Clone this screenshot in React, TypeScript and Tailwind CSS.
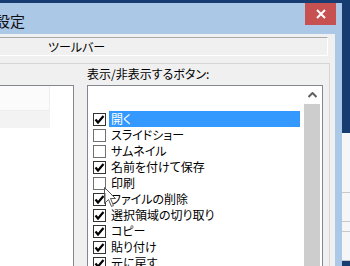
import React from "react";

const items: { label: string; checked: boolean; selected?: boolean }[] = [
  { label: "開く", checked: true, selected: true },
  { label: "スライドショー", checked: false },
  { label: "サムネイル", checked: false },
  { label: "名前を付けて保存", checked: true },
  { label: "印刷", checked: false },
  { label: "ファイルの削除", checked: true },
  { label: "選択領域の切り取り", checked: true },
  { label: "コピー", checked: true },
  { label: "貼り付け", checked: true },
  { label: "元に戻す", checked: true },
];

function Check({ checked }: { checked: boolean }) {
  return (
    <div
      className={`w-[13px] h-[13px] shrink-0 bg-white border ${
        checked ? "border-[#333333]" : "border-[#707070]"
      } flex items-center justify-center`}
    >
      {checked && (
        <svg width="11" height="11" viewBox="0 0 11 11">
          <path d="M1.5 5.5 L4 8.5 L9.5 2" fill="none" stroke="#000" strokeWidth="2.2" />
        </svg>
      )}
    </div>
  );
}

export default function App() {
  return (
    <div className="w-[350px] h-[266px] overflow-hidden relative bg-[#173c71] flex font-['Noto_Sans_CJK_JP',sans-serif] [font-feature-settings:'palt'] text-black">
      {/* window */}
      <div className="w-[342px] h-full flex flex-col pt-[3px]">
        {/* title bar */}
        <div className="h-[31px] shrink-0 bg-[#abc8e7] flex items-start justify-between">
          <div className="text-[15px] leading-none ml-[-5px] mt-[10px] text-[#111]">設定</div>
          <div className="w-[31px] h-[22px] bg-[#c75050] mr-[6px] flex items-center justify-center">
            <svg width="10" height="10" viewBox="0 0 10 10">
              <path d="M1 1 L9 9 M9 1 L1 9" stroke="#fff" strokeWidth="2" />
            </svg>
          </div>
        </div>
        {/* body + frame */}
        <div className="flex-1 flex bg-[#abc8e7]">
          <div className="w-[335px] h-full bg-[#f0f0f0] pt-[3px] flex flex-col">
            {/* toolbar field */}
            <div className="w-[328px] h-[19px] border-t border-t-[#a9a9a9] border-r border-r-white border-b border-b-white bg-[#f0f0f0] flex items-center pl-[48px] text-[12px] leading-none">
              ツールバー
            </div>
            {/* group box */}
            <div className="mt-[7px] w-[330px] flex-1 border-t border-t-[#d5d5d5] border-r border-r-[#d5d5d5] flex">
              {/* left list */}
              <div className="w-[74px] mt-[21px] bg-white border-t border-[#828790] border-r flex flex-col">
                <div className="flex">
                  <div className="w-[50px] h-[25px] bg-[#fbfbfb] border-r border-[#eeeeee] border-b" />
                </div>
                <div className="w-[50px] h-[17px] bg-[#f3f3f3]" />
              </div>
              <div className="w-[13px]" />
              {/* right column */}
              <div className="flex flex-col w-[236px]">
                <div className="h-[21px] pt-[4px] text-[12px] leading-none whitespace-nowrap">
                  表示/非表示するボタン:
                </div>
                <div className="flex-1 bg-white border border-[#828790] border-b-0 flex">
                  <div className="flex-1 pt-[25px] flex flex-col">
                    {items.map((it) => (
                      <div key={it.label} className="h-[16px] flex items-center pl-[5px]">
                        <Check checked={it.checked} />
                        <div
                          className={`ml-[3px] mr-[4px] flex-1 h-[16px] pl-[2px] flex items-center text-[12px] leading-none whitespace-nowrap ${
                            it.selected ? "bg-[#3399ff] text-white" : ""
                          }`}
                        >
                          {it.label}
                        </div>
                      </div>
                    ))}
                  </div>
                  <div className="w-[16px] mr-[2px] flex flex-col">
                    <div className="h-[18px] flex items-center justify-center">
                      <svg width="9" height="6" viewBox="0 0 9 6">
                        <path d="M0.5 5 L4.5 1 L8.5 5" fill="none" stroke="#606060" strokeWidth="2" />
                      </svg>
                    </div>
                    <div className="flex-1 bg-[#cdcdcd]" />
                  </div>
                </div>
              </div>
            </div>
          </div>
        </div>
      </div>
      {/* right strip: background behind window */}
      <div className="w-[8px] h-full flex flex-col">
        <div className="h-[133px] bg-[#173c71]" />
        <div className="flex-1 bg-[#f4f6f8] flex flex-col">
          <div className="h-[60px] border-b border-[#c8c8c8]" />
          <div className="h-[29px] border-b border-[#c8c8c8]" />
          <div className="h-[10px] border-b border-[#c8c8c8]" />
          <div className="h-[29px] border-b border-[#c8c8c8]" />
          <div className="flex-1 bg-[#173c71]" />
        </div>
      </div>
      {/* mouse cursor */}
      <svg className="absolute left-[104px] top-[187px]" width="13" height="21" viewBox="0 0 13 21">
        <path d="M0.5 0.5 L0.5 16.5 L4.5 12.5 L7.5 19.5 L9.5 18.5 L6.5 11.5 L11.5 11.5 Z" fill="rgba(255,255,255,0.6)" stroke="#555" strokeWidth="1" />
      </svg>
    </div>
  );
}
